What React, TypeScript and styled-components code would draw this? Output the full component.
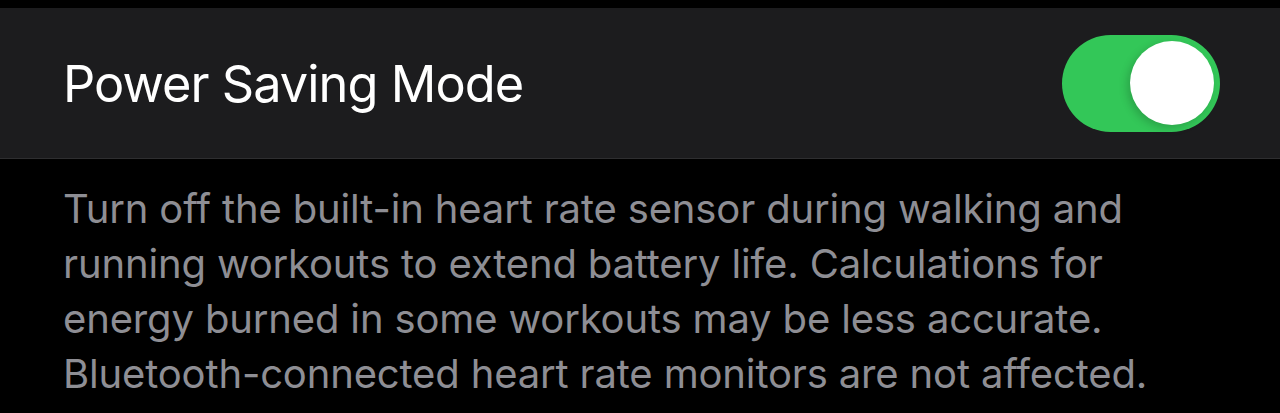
import styled, { createGlobalStyle } from 'styled-components';

const GlobalStyle = createGlobalStyle`
   html, body {
      margin: 0;
      padding: 0;
      background: #000;
   }
   body {
      font-family: Inter, 'Noto Sans', sans-serif;
      -webkit-font-smoothing: antialiased;
   }
`;

function Toggle({ on }: { on: boolean }) {
   return (
      <Track $on={on} role="switch" aria-checked={on}>
         <Knob />
      </Track>
   );
}

function App() {
   return (
      <>
         <GlobalStyle />
         <Page>
            <Group>
               <Row>
                  <Label>Power Saving Mode</Label>
                  <Toggle on />
               </Row>
            </Group>
            <Footer>
               Turn off the built-in heart rate sensor during walking and
               <br />
               running workouts to extend battery life. Calculations for
               <br />
               energy burned in some workouts may be less accurate.
               <br />
               Bluetooth-connected heart rate monitors are not affected.
            </Footer>
         </Page>
      </>
   );
}

export default App;

const Page = styled.div`
   padding-top: 8px;
   min-height: 413px;
   box-sizing: border-box;
   background: #000;
`;
const Group = styled.div`
   background: #1c1c1e;
   border-bottom: 1px solid #2e2e30;
`;
const Row = styled.div`
   display: flex;
   align-items: center;
   justify-content: space-between;
   height: 150px;
   padding: 0 60px 0 63px;
`;
const Label = styled.span`
   color: #fff;
   font-size: 50.5px;
   font-weight: 400;
   letter-spacing: -0.95px;
`;
const Track = styled.div<{ $on: boolean }>`
   position: relative;
   width: 158px;
   height: 97px;
   border-radius: 49px;
   background: ${(p) => (p.$on ? '#33c758' : '#39393d')};
   display: flex;
   align-items: center;
   justify-content: ${(p) => (p.$on ? 'flex-end' : 'flex-start')};
   padding: 0 6px;
   box-sizing: border-box;
`;
const Knob = styled.div`
   width: 84px;
   height: 84px;
   border-radius: 50%;
   background: #fff;
   box-shadow: -3px 3px 8px rgba(0, 0, 0, 0.18);
`;
const Footer = styled.p`
   margin: 0;
   padding: 22px 63px 0;
   color: #8e8e94;
   font-size: 40px;
   line-height: 55px;
   letter-spacing: -0.15px;
`;
